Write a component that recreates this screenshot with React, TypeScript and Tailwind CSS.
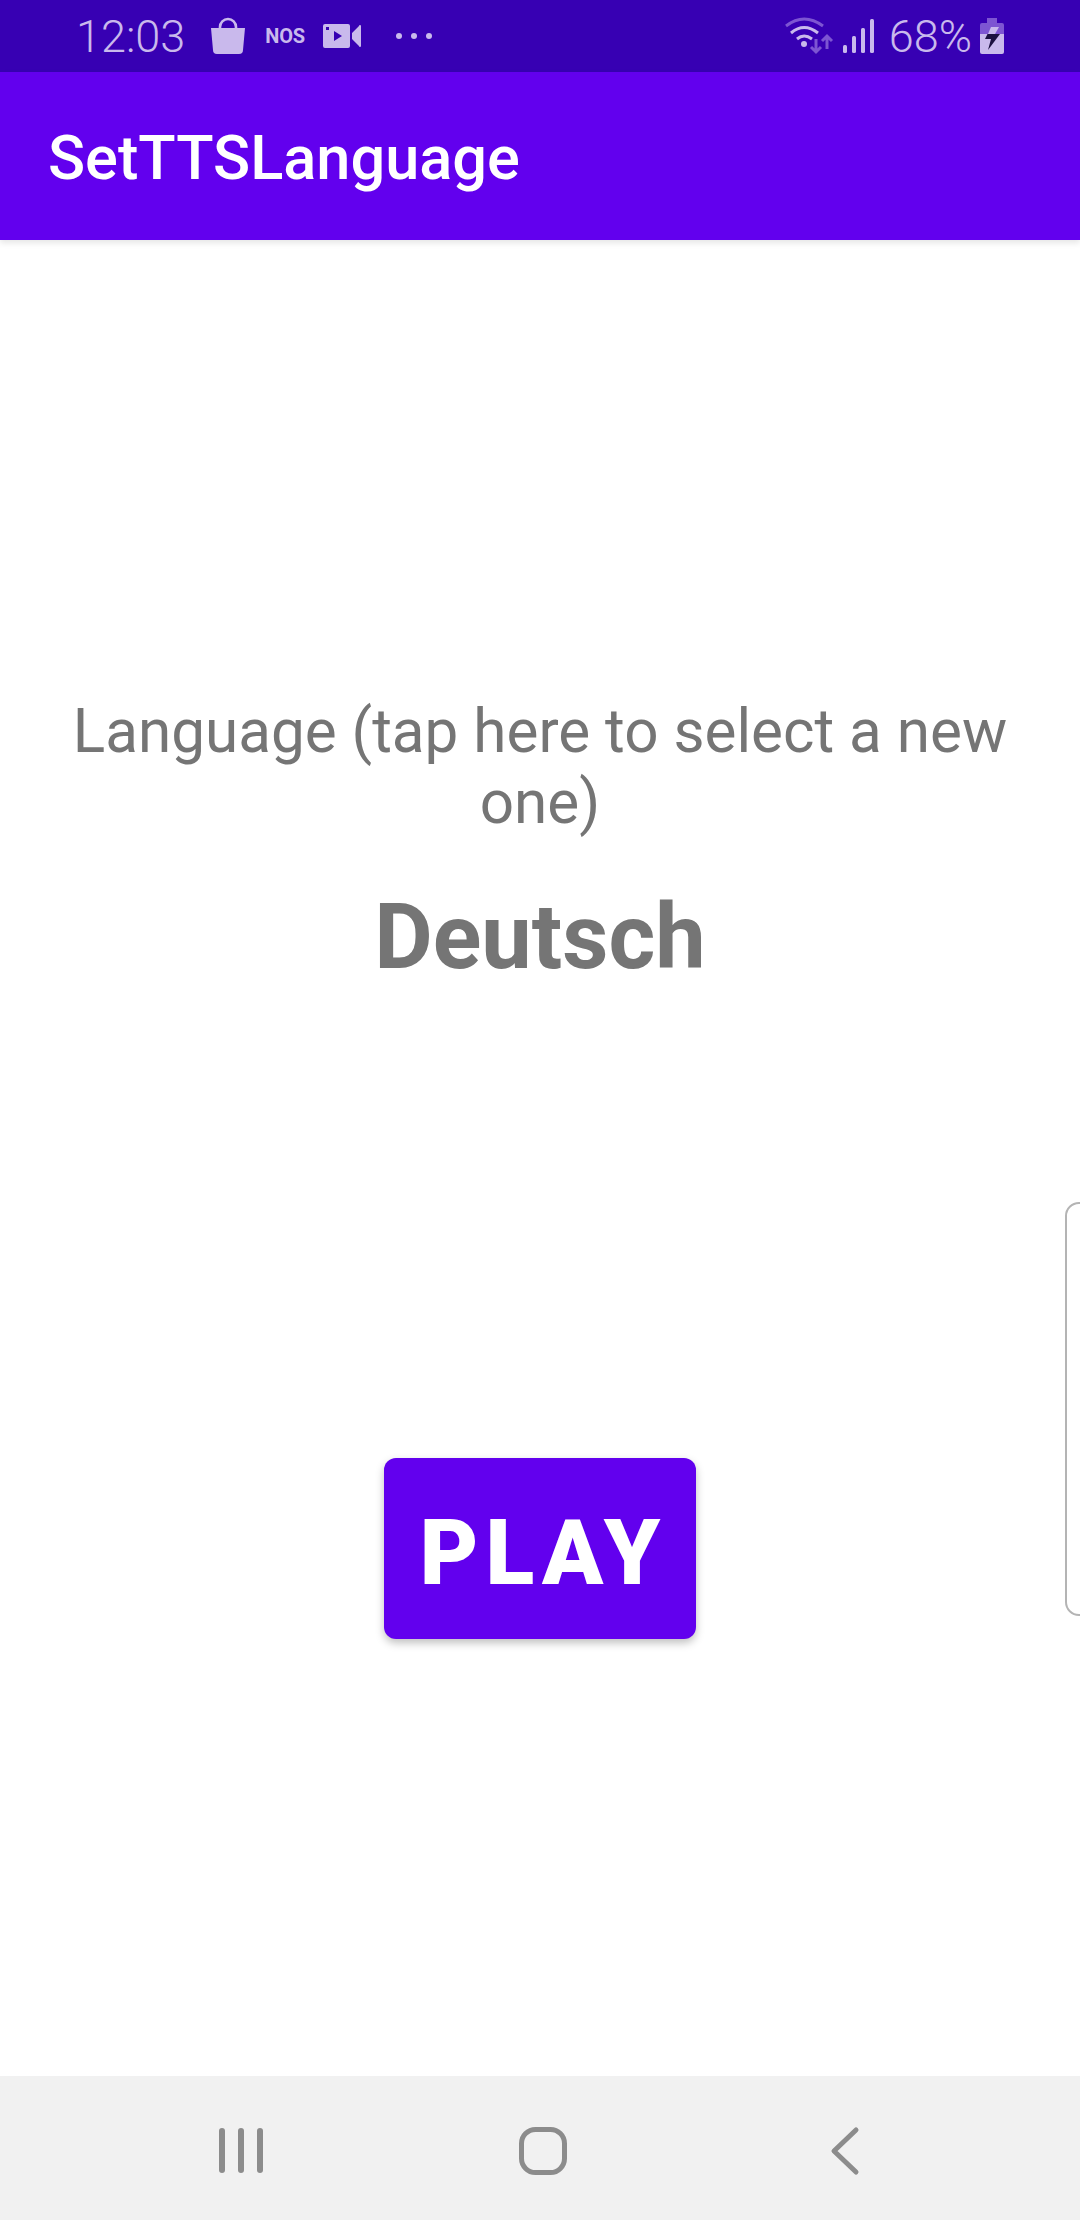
const roboto = "font-['Roboto',sans-serif]";

function Bag() {
  return (
    <svg width="36" height="38" viewBox="0 0 36 38" className="ml-[25px]">
      <path d="M10 13 V10 a8 8 0 0 1 16 0 V13" fill="none" stroke="#c9b9ec" strokeWidth="2.6" />
      <path d="M1 11 H35 L33 33 a4 4 0 0 1 -4 4 H7 a4 4 0 0 1 -4 -4 Z" fill="#c9b9ec" />
    </svg>
  );
}

function Video() {
  return (
    <svg width="38" height="24" viewBox="0 0 38 24" className="ml-[18px]">
      <path fillRule="evenodd" d="M2 0 H25 a2 2 0 0 1 2 2 V22 a2 2 0 0 1 -2 2 H2 a2 2 0 0 1 -2 -2 V2 a2 2 0 0 1 2 -2 Z M3 3 V6 H6 V3 Z M11 7 V17 L19 12 Z" fill="#c9b9ec" />
      <path d="M29 9 L36 2 a1 1 0 0 1 2 0 V22 a1 1 0 0 1 -2 0 L29 15 Z" fill="#c9b9ec" />
    </svg>
  );
}

function Wifi() {
  return (
    <svg width="50" height="38" viewBox="0 0 50 38" className="block">
      <path d="M2 9 Q20 -5 39 9" fill="none" stroke="#7d55d2" strokeWidth="3" />
      <path d="M7 16 Q20 5 34 16" fill="none" stroke="#c9b9ec" strokeWidth="3" />
      <path d="M13 22 Q20 16 28 22" fill="none" stroke="#c9b9ec" strokeWidth="3" />
      <circle cx="20" cy="27" r="3" fill="#c9b9ec" />
      <path d="M32 22 V35 M27 30 L32 35 L37 30" fill="none" stroke="#7d55d2" strokeWidth="3" />
      <path d="M43 32 V19 M38 24 L43 19 L48 24" fill="none" stroke="#7d55d2" strokeWidth="3" />
    </svg>
  );
}

function Signal() {
  return (
    <svg width="32" height="34" viewBox="0 0 32 34" className="block ml-[9px]">
      <rect x="0" y="26" width="4" height="8" rx="1.5" fill="#c9b9ec" />
      <rect x="9" y="17" width="4" height="17" rx="1.5" fill="#c9b9ec" />
      <rect x="18" y="9" width="4" height="25" rx="1.5" fill="#c9b9ec" />
      <rect x="27" y="0" width="4" height="34" rx="1.5" fill="#c9b9ec" />
    </svg>
  );
}

function Battery() {
  return (
    <svg width="24" height="36" viewBox="0 0 24 36" className="block ml-[8px]">
      <path d="M7 0 H17 V5 H22 a2 2 0 0 1 2 2 V16 H0 V7 a2 2 0 0 1 2 -2 H7 Z" fill="#7d55d2" />
      <path d="M0 16 H24 V34 a2 2 0 0 1 -2 2 H2 a2 2 0 0 1 -2 -2 Z" fill="#c9b9ec" />
      <path d="M11 9 H19 L15 16 H8 Z" fill="#c9b9ec" />
      <path d="M7.5 16 H20 L8 32 L11 21 H5 Z" fill="#1c1040" />
    </svg>
  );
}

export default function App() {
  return (
    <div className={`${roboto} relative flex h-[2220px] w-[1080px] flex-col overflow-hidden bg-white`}>
      <div className="flex h-[72px] shrink-0 items-center bg-[#3700B3] pl-[76px] pr-[76px] text-[#c9b9ec]">
        <span className="text-[45px] font-light leading-none">12:03</span>
        <Bag />
        <span className="ml-[19px] text-[20px] font-bold leading-none tracking-[-0.2px]">NOS</span>
        <Video />
        <div className="ml-[35px] flex gap-[9px]">
          <span className="h-[6px] w-[6px] rounded-full bg-[#c9b9ec]" />
          <span className="h-[6px] w-[6px] rounded-full bg-[#c9b9ec]" />
          <span className="h-[6px] w-[6px] rounded-full bg-[#c9b9ec]" />
        </div>
        <div className="ml-auto flex items-center">
          <Wifi />
          <Signal />
          <span className="ml-[14px] text-[45px] font-light leading-none">68%</span>
          <Battery />
        </div>
      </div>
      <header className="flex h-[168px] shrink-0 items-center bg-[#6200EE] pl-[48px] pt-[5px] shadow-[0_3px_6px_rgba(0,0,0,0.1)]">
        <span className="text-[61.3px] font-medium leading-none text-white">SetTTSLanguage</span>
      </header>
      <main className="flex flex-1 flex-col items-center pt-[456px]">
        <p className="w-[960px] text-center text-[60.2px] leading-[71px] text-[#757575]">
          Language (tap here to select a new one)
        </p>
        <p className="mt-[51px] text-[90px] font-bold leading-[98px] text-[#757575]">Deutsch</p>
        <button className="mt-[471px] flex h-[181px] w-[312px] items-center justify-center rounded-[12px] bg-[#6200EE] pl-[7px] pt-[10px] text-[90px] font-black leading-none tracking-[7px] text-white shadow-[0_4px_8px_rgba(0,0,0,0.25)]">
          PLAY
        </button>
      </main>
      <nav className="flex h-[144px] shrink-0 items-center bg-[#f1f1f1]">
        <svg width="720" height="144" viewBox="0 0 720 144" className="ml-[180px]">
          <g fill="#8c8c8c">
            <rect x="39" y="52" width="6" height="45" rx="3" />
            <rect x="58" y="52" width="6" height="45" rx="3" />
            <rect x="77" y="52" width="6" height="45" rx="3" />
          </g>
          <rect x="341.5" y="53.5" width="43" height="43" rx="14" fill="none" stroke="#8c8c8c" strokeWidth="5" />
          <path d="M676 54 L654 75 L676 96" fill="none" stroke="#8c8c8c" strokeWidth="5" strokeLinecap="round" strokeLinejoin="round" />
        </svg>
      </nav>
      <div className="absolute left-[1065px] top-[1202px] h-[414px] w-[30px] rounded-[14px] border-2 border-[#b4b4b4]" />
    </div>
  );
}
